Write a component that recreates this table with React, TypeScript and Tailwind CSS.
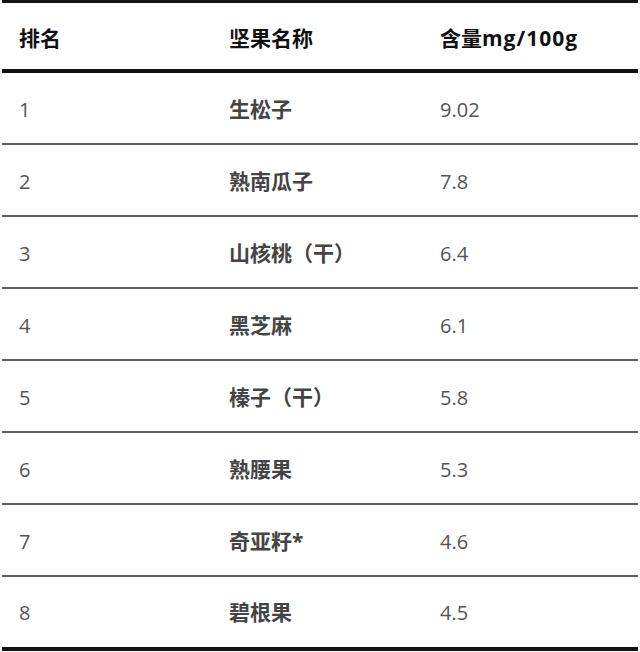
const rows: [string, string, string][] = [
  ['1', '生松子', '9.02'],
  ['2', '熟南瓜子', '7.8'],
  ['3', '山核桃（干）', '6.4'],
  ['4', '黑芝麻', '6.1'],
  ['5', '榛子（干）', '5.8'],
  ['6', '熟腰果', '5.3'],
  ['7', '奇亚籽*', '4.6'],
  ['8', '碧根果', '4.5'],
];

export default function App() {
  return (
    <div
      className="w-[640px] h-[652px] bg-white px-[2px]"
      style={{ fontFamily: '"Open Sans", "Noto Sans CJK SC", sans-serif' }}
    >
      <div className="border-t-[3px] border-[#151515]">
        <div className="grid grid-cols-[210px_211px_1fr] h-[70px] items-center border-b-4 border-[#111] text-[21px] font-bold text-[#111] pt-[6px]">
          <div className="pl-[17px]">排名</div>
          <div className="pl-[17px]">坚果名称</div>
          <div className="pl-[17px]">
            含量<span className="tracking-[1px]">mg/100g</span>
          </div>
        </div>
        {rows.map(([rank, name, value], i) => (
          <div
            key={rank}
            className={
              i === rows.length - 1
                ? 'grid grid-cols-[210px_211px_1fr] h-[74px] items-center border-b-4 border-[#111] pt-[2px]'
                : 'grid grid-cols-[210px_211px_1fr] h-[72px] items-center border-b-2 border-[#5f5f5f] pt-[4px]'
            }
          >
            <div className="pl-[17px] text-[20px] text-[#555]">{rank}</div>
            <div className="pl-[17px] text-[21px] font-bold text-[#444]">{name}</div>
            <div className="pl-[17px] text-[20px] text-[#555]">{value}</div>
          </div>
        ))}
      </div>
    </div>
  );
}
